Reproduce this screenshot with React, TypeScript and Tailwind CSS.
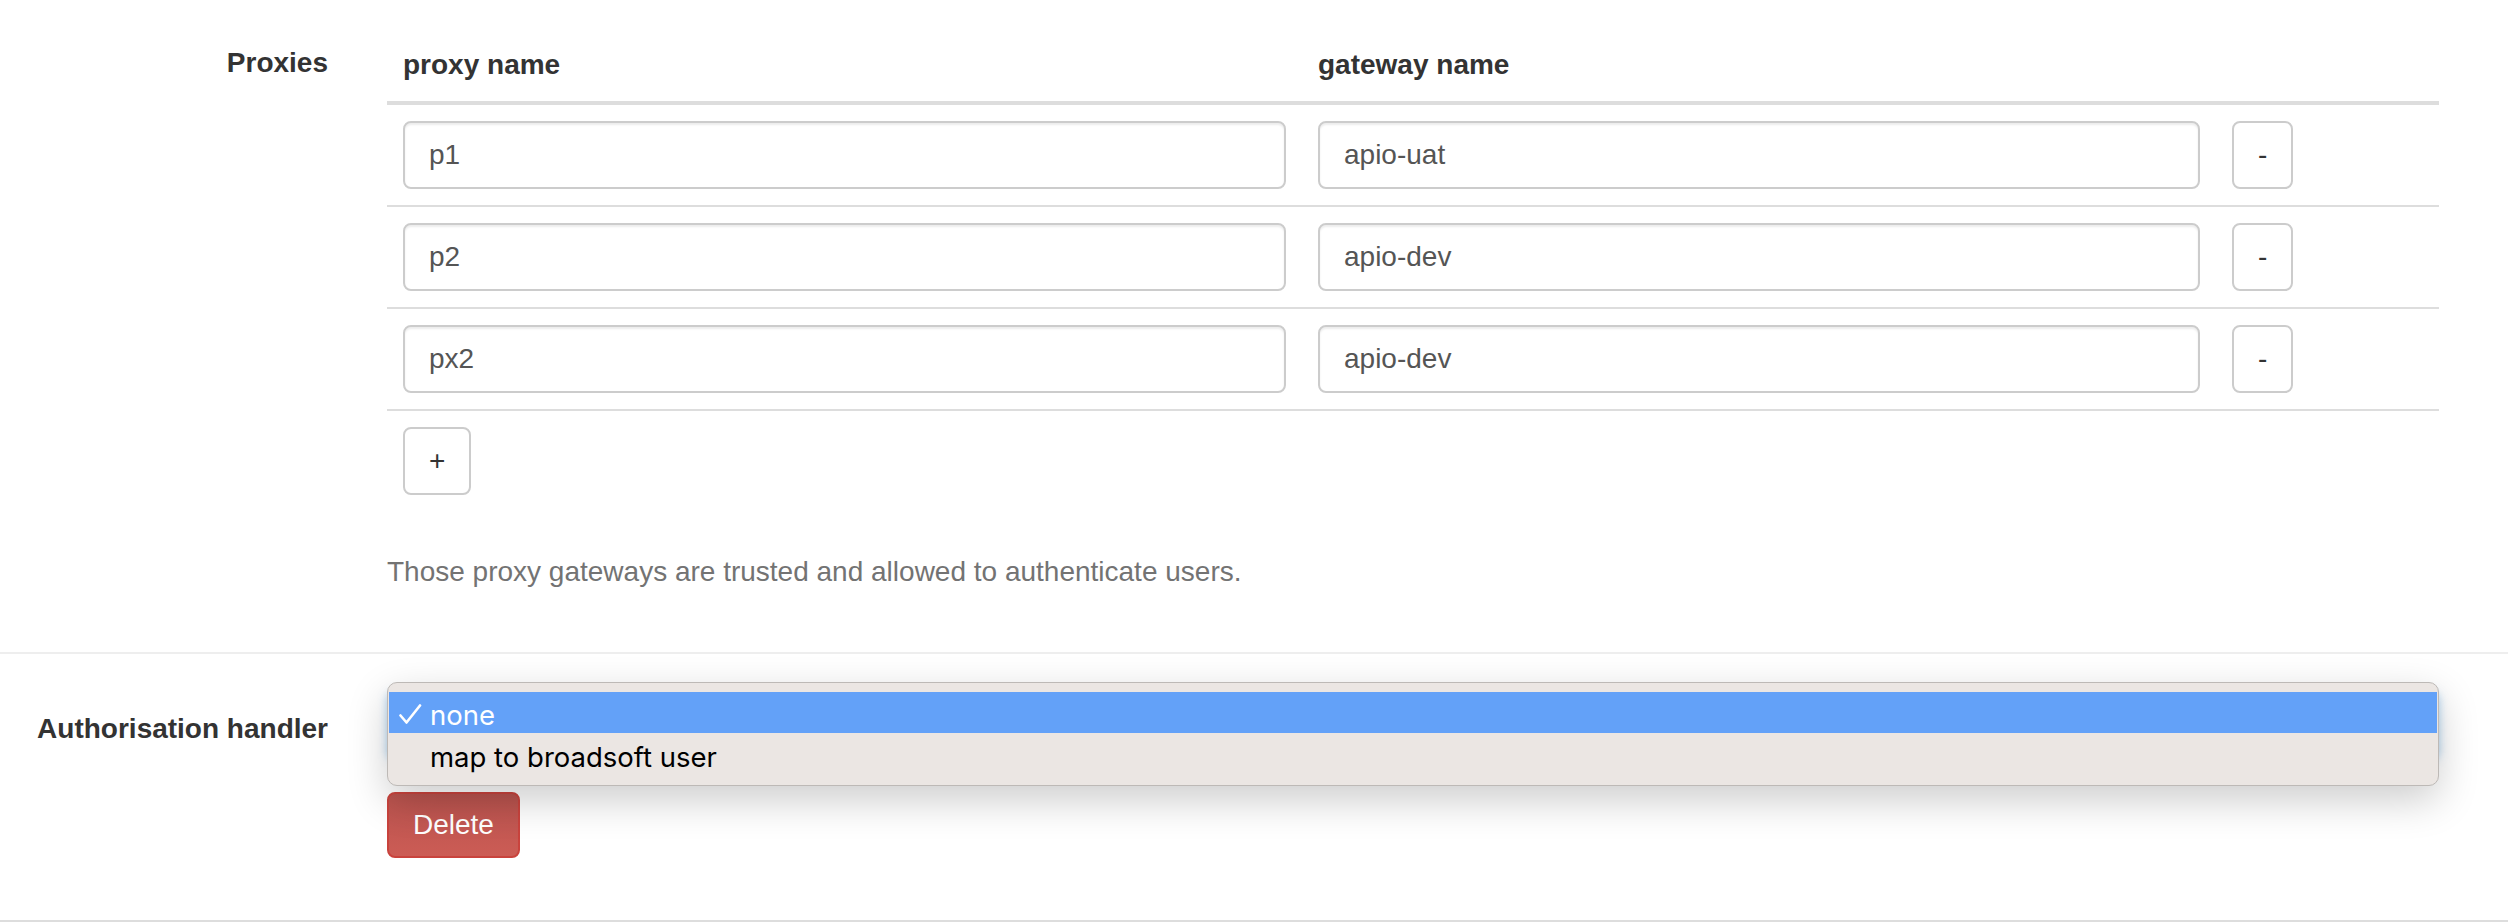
import { useState } from "react";

type Proxy = {
  id: number;
  name: string;
  gateway: string;
};

const initialProxies: Proxy[] = [
  { id: 1, name: "p1", gateway: "apio-uat" },
  { id: 2, name: "p2", gateway: "apio-dev" },
  { id: 3, name: "px2", gateway: "apio-dev" },
];

const handlers = ["none", "map to broadsoft user"];

function CheckIcon() {
  return (
    <svg width="23" height="20" viewBox="0 0 23 20" fill="none" className="block">
      <path d="M1.5 11.5 L7.5 18.5 L21 1.5" stroke="white" strokeWidth="2.6" strokeLinecap="round" strokeLinejoin="round" />
    </svg>
  );
}

function ProxiesTable({ proxies, onRemove, onAdd }: { proxies: Proxy[]; onRemove: (id: number) => void; onAdd: () => void }) {
  return (
    <table className="w-full table-fixed border-separate border-spacing-0">
      <colgroup>
        <col className="w-[915px]" />
        <col className="w-[914px]" />
        <col className="w-[223px]" />
      </colgroup>
      <thead>
        <tr className="text-left">
          <th className="px-4 py-4 font-bold border-b-4 border-[#dddddd]">proxy name</th>
          <th className="px-4 py-4 font-bold border-b-4 border-[#dddddd]">gateway name</th>
          <th className="px-4 py-4 border-b-4 border-[#dddddd]"></th>
        </tr>
      </thead>
      <tbody>
        {proxies.map((p, i) => (
          <tr key={p.id}>
            <td className={`px-4 py-4 ${i > 0 ? "border-t-2 border-[#dddddd]" : ""}`}>
              <input
                defaultValue={p.name}
                className="block w-full h-[68px] px-[24px] border-2 border-[#cccccc] rounded-[8px] text-[#555555] bg-white outline-none shadow-[inset_0_2px_2px_rgba(0,0,0,0.075)]"
              />
            </td>
            <td className={`px-4 py-4 ${i > 0 ? "border-t-2 border-[#dddddd]" : ""}`}>
              <input
                defaultValue={p.gateway}
                className="block w-full h-[68px] px-[24px] border-2 border-[#cccccc] rounded-[8px] text-[#555555] bg-white outline-none shadow-[inset_0_2px_2px_rgba(0,0,0,0.075)]"
              />
            </td>
            <td className={`px-4 py-4 ${i > 0 ? "border-t-2 border-[#dddddd]" : ""}`}>
              <button
                onClick={() => onRemove(p.id)}
                className="block h-[68px] px-[24px] border-2 border-[#cccccc] rounded-[8px] bg-white text-[#333333]"
              >
                -
              </button>
            </td>
          </tr>
        ))}
        <tr>
          <td className="px-4 py-4 border-t-2 border-[#dddddd]">
            <button onClick={onAdd} className="block h-[68px] px-[24px] border-2 border-[#cccccc] rounded-[8px] bg-white text-[#333333]">
              +
            </button>
          </td>
          <td className="border-t-2 border-[#dddddd]"></td>
          <td className="border-t-2 border-[#dddddd]"></td>
        </tr>
      </tbody>
    </table>
  );
}

export default function App() {
  const [proxies, setProxies] = useState<Proxy[]>(initialProxies);
  const [handler, setHandler] = useState("none");

  return (
    <div className="min-h-[924px] bg-white text-[28px] leading-[40px] text-[#333333] font-['Liberation_Sans',Arial,sans-serif]">
      <div className="flex pt-[29px] pb-[60px] border-b-2 border-[#eeeeee]">
        <div className="w-[358px] shrink-0 pr-[30px] pt-[14px] text-right font-bold">Proxies</div>
        <div className="ml-[29px] w-[2052px]">
          <ProxiesTable
            proxies={proxies}
            onRemove={(id) => setProxies((ps) => ps.filter((p) => p.id !== id))}
            onAdd={() => setProxies((ps) => [...ps, { id: Date.now(), name: "", gateway: "" }])}
          />
          <p className="mt-[41px] text-[#737373]">Those proxy gateways are trusted and allowed to authenticate users.</p>
        </div>
      </div>

      <div className="flex pt-[38px] pb-[62px] border-b-2 border-[#dddddd]">
        <div className="w-[358px] shrink-0 pr-[30px] pt-[17px] text-right font-bold">Authorisation handler</div>
        <div className="ml-[29px] w-[2052px]">
          <div className="relative h-[68px] rounded-[8px] border-2 border-[#66afe9] bg-white shadow-[0_0_8px_rgba(102,175,233,0.55)]">
            <div className="absolute left-[-2px] top-[-12px] w-[2052px] h-[104px] rounded-[10px] border border-[#bdb9b6] bg-[#ebe6e3] pt-[9px] shadow-[0_14px_40px_rgba(0,0,0,0.2)] font-['Inter','Noto_Sans',sans-serif] text-[27.5px]">
              {handlers.map((h) => (
                <div
                  key={h}
                  onClick={() => setHandler(h)}
                  className={`flex items-center mx-[1px] ${h === handler ? "h-[41px] bg-[#63a1f8] text-white" : "h-[43px] text-black"}`}
                >
                  <span className="w-[41px] pl-[10px] pt-[3px] shrink-0">{h === handler ? <CheckIcon /> : null}</span>
                  <span className="leading-[36px] pt-[4px]">{h}</span>
                </div>
              ))}
            </div>
          </div>
          <button className="mt-[32px] h-[66px] px-[24px] rounded-[8px] border-2 border-[#c9433d] bg-gradient-to-b from-[#b9534e] to-[#cc5c55] text-white">
            Delete
          </button>
        </div>
      </div>
    </div>
  );
}
